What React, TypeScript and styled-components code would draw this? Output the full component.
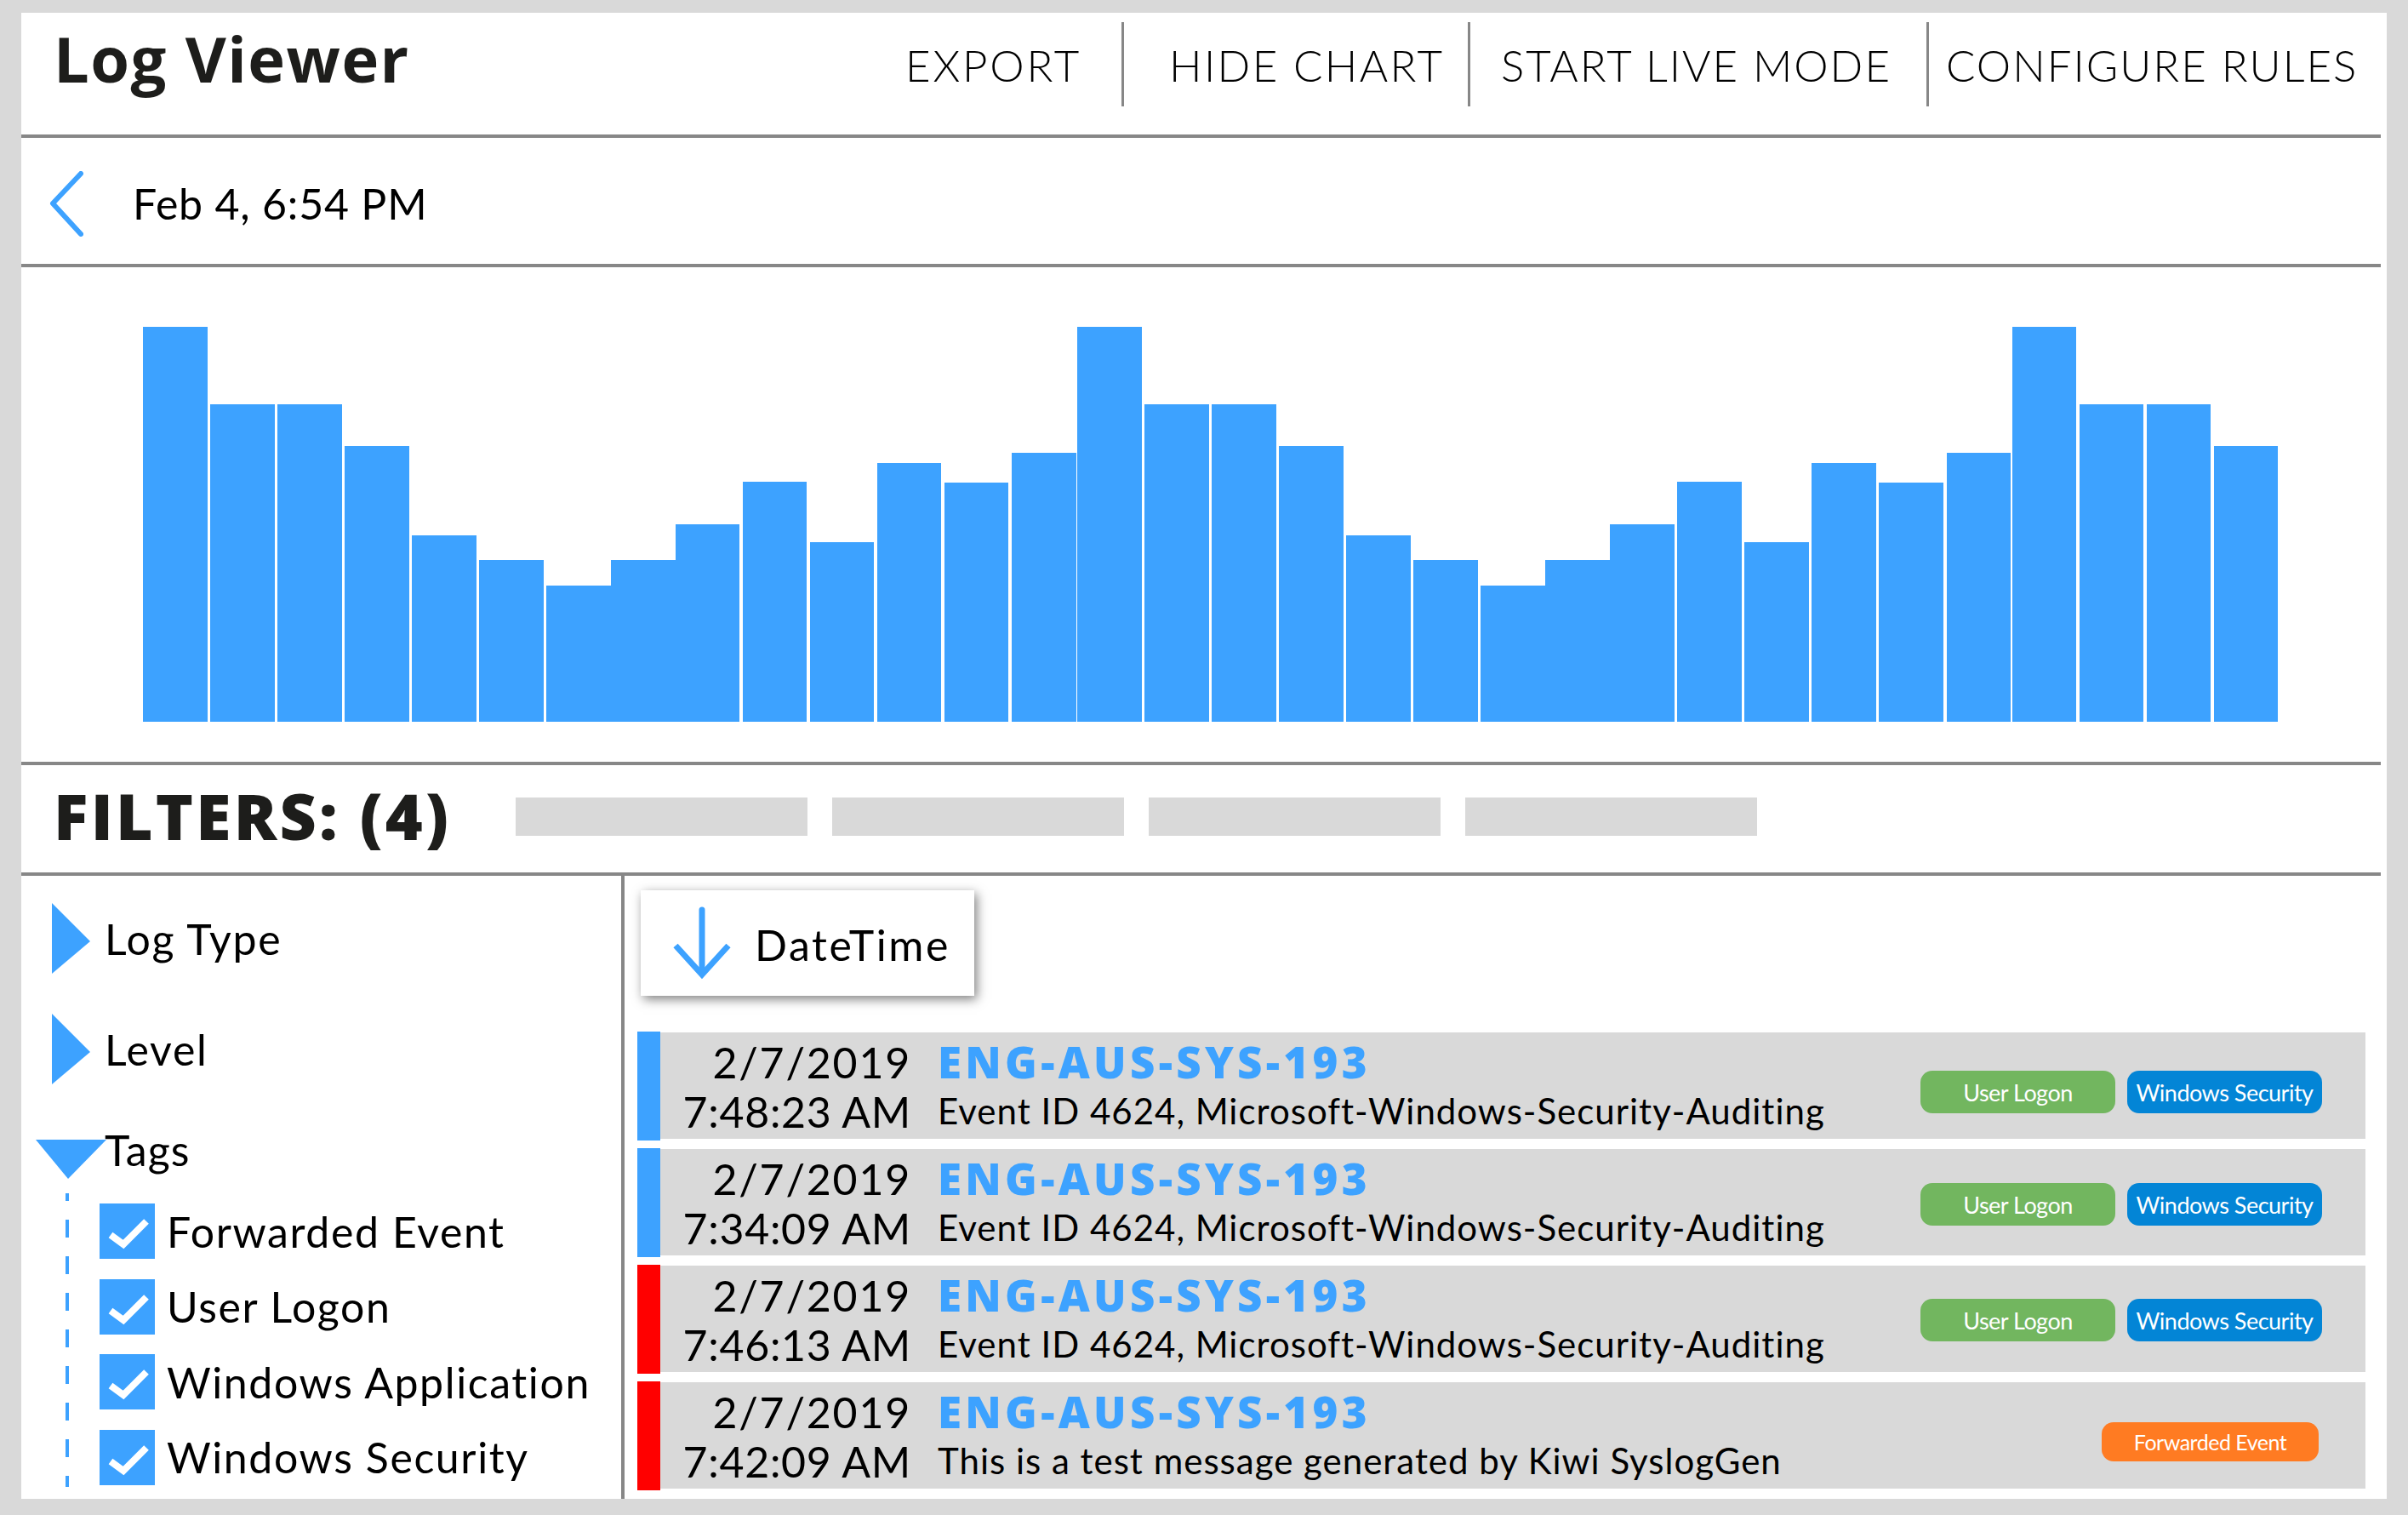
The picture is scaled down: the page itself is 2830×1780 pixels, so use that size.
import React from 'react';
import styled, { createGlobalStyle } from 'styled-components';

const BLUE = '#3da2ff';
const RULE = '#878787';
const HEAVY = `'Open Sans', 'Liberation Sans', sans-serif`;

const GlobalStyle = createGlobalStyle`
  html, body {
    margin: 0;
    width: 2830px;
    height: 1780px;
    overflow: hidden;
    background: #d9d9d9;
  }
  * { box-sizing: border-box; }
`;

const tops = [464, 373, 373, 324, 219, 190, 160, 190, 232, 282, 211, 304, 281, 316];
const heights = [...tops, ...tops, 464, 373, 373, 324];
// most bars sit 3.5px apart, a few touch their neighbour
const barGaps: Record<number, number> = { 6: 0.5, 7: 0, 13: 1.5, 20: 0.5, 21: 0.5, 27: 1.5 };

const navItems = [
  { label: 'EXPORT', width: 254, pad: 0, divider: false, spacing: 2.8 },
  { label: 'HIDE CHART', width: 407, pad: 53, divider: true, spacing: 2.4 },
  { label: 'START LIVE MODE', width: 539, pad: 36, divider: true, spacing: 2 },
  { label: 'CONFIGURE RULES', width: 534, pad: 20, divider: true, spacing: 2 },
];

const tagOptions = ['Forwarded Event', 'User Logon', 'Windows Application', 'Windows Security'];

const GREEN_TAG = '#72b65f';
const BLUE_TAG = '#0385d6';

const logs = [
  { date: '2/7/2019', time: '7:48:23 AM', level: BLUE, message: 'Event ID 4624, Microsoft-Windows-Security-Auditing', tagTop: 45, wide: false },
  { date: '2/7/2019', time: '7:34:09 AM', level: BLUE, message: 'Event ID 4624, Microsoft-Windows-Security-Auditing', tagTop: 40, wide: false },
  { date: '2/7/2019', time: '7:46:13 AM', level: '#ff0000', message: 'Event ID 4624, Microsoft-Windows-Security-Auditing', tagTop: 39, wide: false },
  { date: '2/7/2019', time: '7:42:09 AM', level: '#ff0000', message: 'This is a test message generated by Kiwi SyslogGen', tagTop: 47, wide: true },
];

const TriangleRight = () => (
  <svg width="45" height="83" viewBox="0 0 45 83">
    <polygon points="0,0 45,45 0,83" fill={BLUE} />
  </svg>
);

const TriangleDown = () => (
  <svg width="83" height="46" viewBox="0 0 83 46">
    <polygon points="0,0 83,0 38,46" fill={BLUE} />
  </svg>
);

const Chevron = () => (
  <svg width="40" height="77" viewBox="0 0 40 77">
    <polyline points="37,3 4,38 37,74" fill="none" stroke={BLUE} strokeWidth="6" strokeLinecap="round" strokeLinejoin="round" />
  </svg>
);

const ArrowDown = () => (
  <svg width="68" height="86" viewBox="0 0 68 86">
    <path d="M34 4 L34 76" fill="none" stroke={BLUE} strokeWidth="7" strokeLinecap="round" />
    <path d="M3 46 L34 80 L65 46" fill="none" stroke={BLUE} strokeWidth="7" strokeLinecap="butt" strokeMiterlimit="6" />
  </svg>
);

const CheckMark = () => (
  <svg width="65" height="65" viewBox="0 0 65 65">
    <polyline points="13,37 28,48 55,21" fill="none" stroke="#fff" strokeWidth="8" />
  </svg>
);

export default function App() {
  return (
    <Page>
      <GlobalStyle />
      <Panel>
        <Header>
          <Title>Log Viewer</Title>
          <Nav>
            {navItems.map((item) => (
              <NavItem key={item.label} $width={item.width} $pad={item.pad} $divider={item.divider} $spacing={item.spacing}>
                {item.label}
              </NavItem>
            ))}
          </Nav>
        </Header>

        <DateBar>
          <Chevron />
          <DateLabel>Feb 4, 6:54 PM</DateLabel>
        </DateBar>

        <ChartSection>
          {heights.map((h, i) => (
            <Bar key={i} style={{ height: h }} $gap={i === 0 ? 0 : barGaps[i - 1] ?? 3.55} />
          ))}
        </ChartSection>

        <FiltersBar>
          <FiltersTitle>FILTERS: (4)</FiltersTitle>
          <Chips>
            <Chip />
            <Chip />
            <Chip />
            <Chip />
          </Chips>
        </FiltersBar>

        <Body>
          <Sidebar>
            <FilterRow>
              <TriangleRight />
              <FilterLabel>Log Type</FilterLabel>
            </FilterRow>
            <FilterRow>
              <TriangleRight />
              <FilterLabel>Level</FilterLabel>
            </FilterRow>
            <OpenFilterRow>
              <TriangleDown />
              <OpenLabel>Tags</OpenLabel>
            </OpenFilterRow>
            <TagTree>
              <TreeLine />
              <TagList>
                {tagOptions.map((tag) => (
                  <TagOption key={tag}>
                    <CheckBox>
                      <CheckMark />
                    </CheckBox>
                    <TagLabel>{tag}</TagLabel>
                  </TagOption>
                ))}
              </TagList>
            </TagTree>
          </Sidebar>

          <Main>
            <SortButton>
              <ArrowDown />
              <SortLabel>DateTime</SortLabel>
            </SortButton>
            <LogList>
              {logs.map((log) => (
                <LogRow key={log.time}>
                  <LevelMark $color={log.level} />
                  <DateCell>
                    <DateLine>{log.date}</DateLine>
                    <TimeLine>{log.time}</TimeLine>
                  </DateCell>
                  <LogText>
                    <Host>ENG-AUS-SYS-193</Host>
                    <Message>{log.message}</Message>
                  </LogText>
                  <Pills $top={log.tagTop} $wide={log.wide}>
                    {log.wide ? (
                      <Pill $color="#ff7b22" $width={255} $height={46} $size={25}>Forwarded Event</Pill>
                    ) : (
                      <>
                        <Pill $color={GREEN_TAG} $width={229} $height={50} $size={27}>User Logon</Pill>
                        <Pill $color={BLUE_TAG} $width={229} $height={50} $size={27}>Windows Security</Pill>
                      </>
                    )}
                  </Pills>
                </LogRow>
              ))}
            </LogList>
          </Main>
        </Body>
      </Panel>
    </Page>
  );
}

const Page = styled.div`
  width: 2830px;
  height: 1780px;
  padding: 15px 25px 19px;
  font-family: 'Lato', 'Liberation Sans', sans-serif;
  color: #000;
`;

const Panel = styled.div`
  width: 2780px;
  height: 1746px;
  background: #fff;
  display: flex;
  flex-direction: column;
`;

const Header = styled.header`
  height: 147px;
  margin-right: 7px;
  padding: 11px 0 0 38px;
  border-bottom: 4px solid ${RULE};
  display: flex;
  align-items: flex-start;
  justify-content: space-between;
`;

const Title = styled.h1`
  margin: 0;
  font-family: ${HEAVY};
  font-size: 74px;
  font-weight: 700;
  line-height: 86px;
  letter-spacing: 1.5px;
  color: #1d1d1b;
`;

const Nav = styled.nav`
  display: flex;
`;

const NavItem = styled.div<{ $width: number; $pad: number; $divider: boolean; $spacing: number }>`
  width: ${(p) => p.$width}px;
  height: 99px;
  padding-left: ${(p) => p.$pad}px;
  border-left: ${(p) => (p.$divider ? `3px solid ${RULE}` : 'none')};
  display: flex;
  align-items: center;
  font-size: 51px;
  font-weight: 300;
  letter-spacing: ${(p) => p.$spacing}px;
  white-space: nowrap;
  padding-top: 2px;
`;

const DateBar = styled.div`
  height: 152px;
  margin-right: 7px;
  padding: 6px 0 0 33px;
  border-bottom: 4px solid ${RULE};
  display: flex;
  align-items: center;
  gap: 58px;
`;

const DateLabel = styled.div`
  font-size: 50px;
  line-height: 60px;
  letter-spacing: 0.8px;
`;

const ChartSection = styled.section`
  height: 585px;
  margin-right: 7px;
  padding: 70px 0 47px 143px;
  border-bottom: 4px solid ${RULE};
  display: flex;
  align-items: flex-end;
`;

const Bar = styled.div<{ $gap: number }>`
  flex: none;
  width: 75.5px;
  margin-left: ${(p) => p.$gap}px;
  background: ${BLUE};
`;

const FiltersBar = styled.div`
  height: 130px;
  margin-right: 7px;
  padding: 0 0 6px 38px;
  border-bottom: 4px solid ${RULE};
  display: flex;
  align-items: center;
`;

const FiltersTitle = styled.h2`
  width: 543px;
  margin: 0 0 3px;
  font-family: ${HEAVY};
  font-size: 75px;
  font-weight: 800;
  line-height: 90px;
  letter-spacing: 3.2px;
  color: #1d1d1b;
  white-space: nowrap;
`;

const Chips = styled.div`
  display: flex;
  gap: 29px;
`;

const Chip = styled.div`
  width: 343px;
  height: 45px;
  background: #d9d9d9;
`;

const Body = styled.div`
  flex: 1;
  min-height: 0;
  display: flex;
`;

const Sidebar = styled.aside`
  flex: none;
  width: 709px;
  padding-top: 32px;
  border-right: 4px solid ${RULE};
`;

const FilterRow = styled.div`
  height: 83px;
  margin: 0 0 47px 36px;
  display: flex;
  align-items: center;
  gap: 17px;
`;

const FilterLabel = styled.div`
  font-size: 50px;
  line-height: 60px;
  letter-spacing: 1.7px;
  white-space: nowrap;
`;

const OpenFilterRow = styled.div`
  height: 46px;
  margin: 65px 0 0 17px;
  display: flex;
  align-items: flex-start;
`;

const OpenLabel = styled(FilterLabel)`
  margin: -18px 0 0 -2px;
  letter-spacing: 1px;
`;

const TagTree = styled.div`
  height: 345px;
  margin: 17px 0 0 52px;
  display: flex;
  gap: 36px;
`;

const TreeLine = styled.div`
  flex: none;
  width: 4px;
  background-image: linear-gradient(${BLUE} 21px, transparent 21px);
  background-size: 4px 43px;
  background-position: 0 -12px;
`;

const TagList = styled.div`
  padding-top: 12px;
  display: flex;
  flex-direction: column;
  gap: 23.5px;
`;

const TagOption = styled.label`
  height: 65px;
  display: flex;
  align-items: center;
  gap: 14px;
`;

const CheckBox = styled.span`
  width: 65px;
  height: 65px;
  background: ${BLUE};
  display: block;

  svg {
    display: block;
  }
`;

const TagLabel = styled.span`
  font-size: 50px;
  line-height: 60px;
  letter-spacing: 1.6px;
  white-space: nowrap;
`;

const Main = styled.main`
  flex: 1;
  min-width: 0;
  padding: 17px 25px 0 15px;
`;

const SortButton = styled.div`
  width: 392px;
  height: 124px;
  margin-left: 4px;
  padding-left: 38px;
  background: #fff;
  box-shadow: 3px 4px 12px rgba(0, 0, 0, 0.5);
  display: flex;
  align-items: center;
  gap: 28px;
`;

const SortLabel = styled.div`
  padding-top: 4px;
  font-size: 50px;
  line-height: 60px;
  letter-spacing: 2.6px;
`;

const LogList = styled.div`
  margin-top: 43px;
  display: flex;
  flex-direction: column;
  gap: 12px;
`;

const LogRow = styled.div`
  height: 125px;
  background: #d9d9d9;
  display: flex;
  align-items: flex-start;
`;

const LevelMark = styled.div<{ $color: string }>`
  flex: none;
  width: 27px;
  height: 128px;
  margin-top: -1px;
  background: ${(p) => p.$color};
`;

const DateCell = styled.div`
  flex: none;
  width: 295px;
  padding-top: 6px;
  text-align: right;
  font-size: 50px;
  line-height: 58px;
  white-space: nowrap;
`;

const DateLine = styled.div`
  letter-spacing: 1.8px;
`;

const TimeLine = styled.div`
  letter-spacing: 0.7px;
`;

const LogText = styled.div`
  margin-left: 31px;
  padding-top: 5px;
  white-space: nowrap;
`;

const Host = styled.div`
  font-family: ${HEAVY};
  font-size: 51px;
  font-weight: 800;
  line-height: 58px;
  letter-spacing: 4.3px;
  color: ${BLUE};
`;

const Message = styled.div`
  font-size: 42px;
  line-height: 58px;
  letter-spacing: 1px;
`;

const Pills = styled.div<{ $top: number; $wide: boolean }>`
  margin: ${(p) => p.$top}px ${(p) => (p.$wide ? 55 : 51)}px 0 auto;
  display: flex;
  gap: 14px;
`;

const Pill = styled.div<{ $color: string; $width: number; $height: number; $size: number }>`
  width: ${(p) => p.$width}px;
  height: ${(p) => p.$height}px;
  border-radius: 14px;
  background: ${(p) => p.$color};
  color: #fff;
  font-size: ${(p) => p.$size}px;
  letter-spacing: -0.5px;
  display: flex;
  align-items: center;
  justify-content: center;
  white-space: nowrap;
`;
